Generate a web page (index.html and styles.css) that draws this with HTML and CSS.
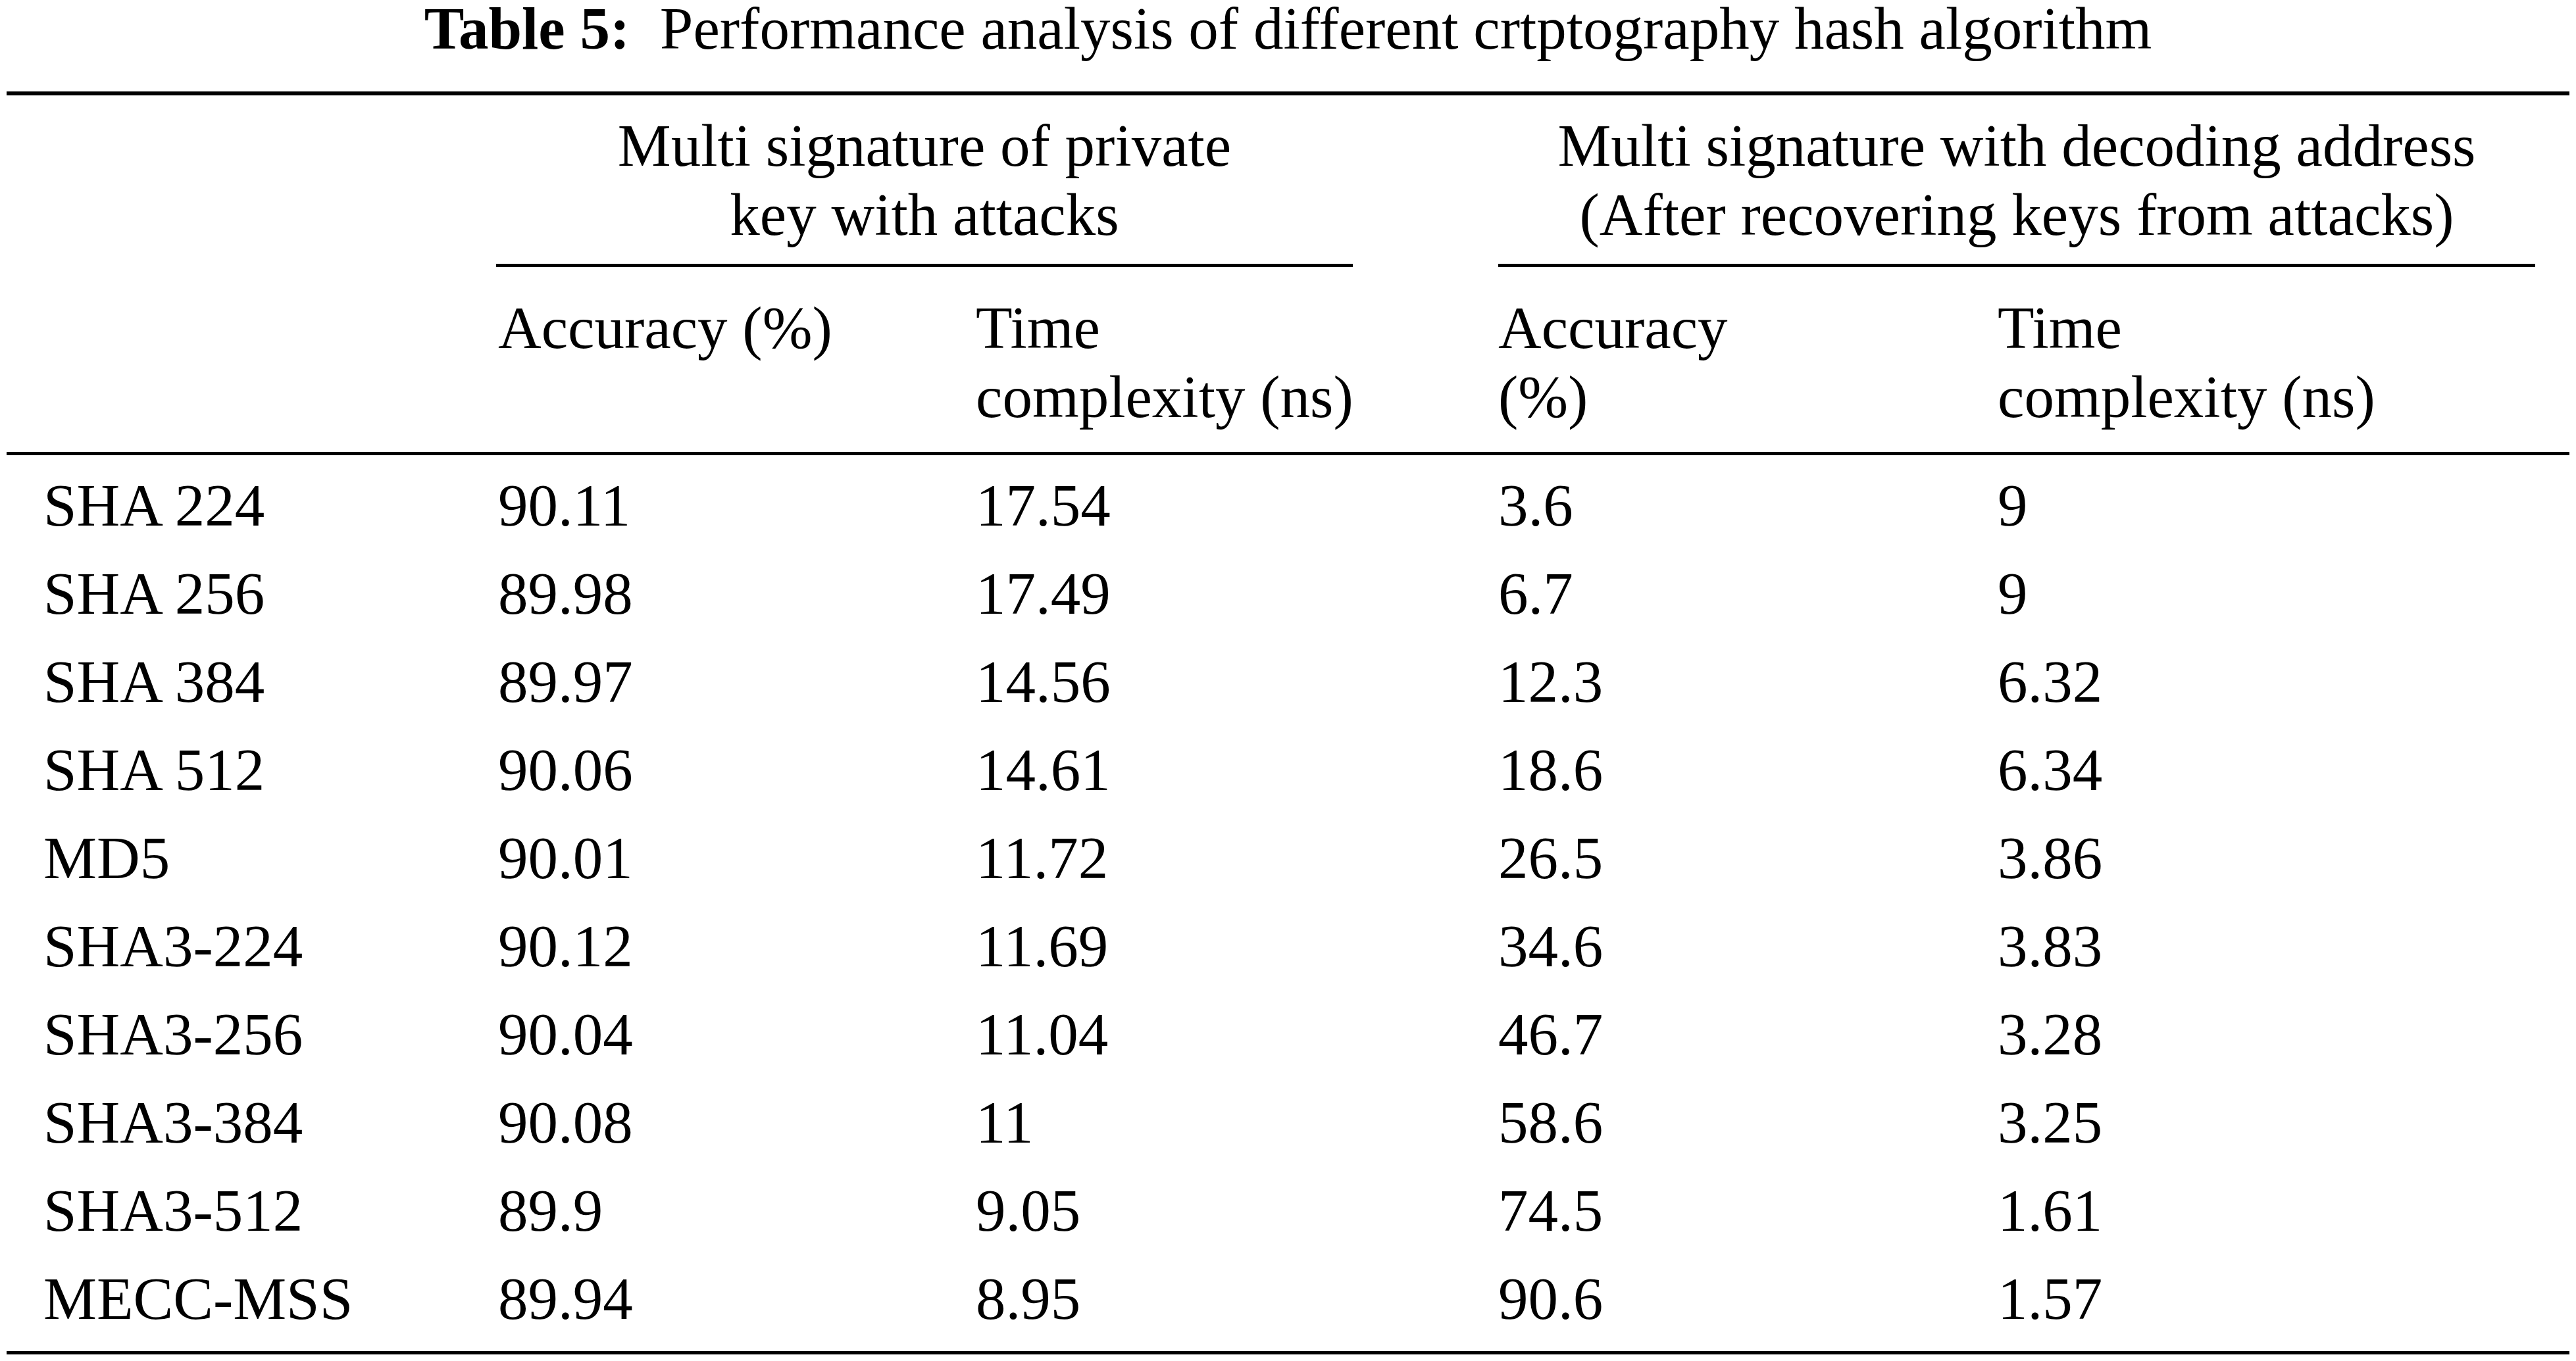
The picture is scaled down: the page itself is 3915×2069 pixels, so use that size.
FILE: index.html
```html
<!DOCTYPE html>
<html>
<head>
<meta charset="utf-8">
<link rel="stylesheet" href="styles.css">
</head>
<body>
<div class="page">
  <div class="caption"><span class="label">Table 5:</span>Performance analysis of different crtptography hash algorithm</div>
  <div class="tbl">
    <div class="head-groups">
      <div class="blank"></div>
      <div class="group g1">Multi signature of private<br>key with attacks</div>
      <div class="group g2">Multi signature with decoding address<br>(After recovering keys from attacks)</div>
    </div>
    <div class="head-sub">
      <div class="cell first"></div>
      <div class="cell">Accuracy (%)</div>
      <div class="cell">Time<br>complexity (ns)</div>
      <div class="cell">Accuracy<br>(%)</div>
      <div class="cell">Time<br>complexity (ns)</div>
    </div>
    <div class="body">
      <div class="row"><div class="cell first">SHA 224</div><div class="cell">90.11</div><div class="cell">17.54</div><div class="cell">3.6</div><div class="cell">9</div></div>
      <div class="row"><div class="cell first">SHA 256</div><div class="cell">89.98</div><div class="cell">17.49</div><div class="cell">6.7</div><div class="cell">9</div></div>
      <div class="row"><div class="cell first">SHA 384</div><div class="cell">89.97</div><div class="cell">14.56</div><div class="cell">12.3</div><div class="cell">6.32</div></div>
      <div class="row"><div class="cell first">SHA 512</div><div class="cell">90.06</div><div class="cell">14.61</div><div class="cell">18.6</div><div class="cell">6.34</div></div>
      <div class="row"><div class="cell first">MD5</div><div class="cell">90.01</div><div class="cell">11.72</div><div class="cell">26.5</div><div class="cell">3.86</div></div>
      <div class="row"><div class="cell first">SHA3-224</div><div class="cell">90.12</div><div class="cell">11.69</div><div class="cell">34.6</div><div class="cell">3.83</div></div>
      <div class="row"><div class="cell first">SHA3-256</div><div class="cell">90.04</div><div class="cell">11.04</div><div class="cell">46.7</div><div class="cell">3.28</div></div>
      <div class="row"><div class="cell first">SHA3-384</div><div class="cell">90.08</div><div class="cell">11</div><div class="cell">58.6</div><div class="cell">3.25</div></div>
      <div class="row"><div class="cell first">SHA3-512</div><div class="cell">89.9</div><div class="cell">9.05</div><div class="cell">74.5</div><div class="cell">1.61</div></div>
      <div class="row"><div class="cell first">MECC-MSS</div><div class="cell">89.94</div><div class="cell">8.95</div><div class="cell">90.6</div><div class="cell">1.57</div></div>
    </div>
  </div>
</div>
</body>
</html>
```

FILE: styles.css
```css
html, body {
  margin: 0;
  padding: 0;
  background: #ffffff;
}
body {
  font-family: "Liberation Serif", "Times New Roman", serif;
  color: #000;
  font-size: 91px;
  line-height: 105px;
}
.page {
  width: 3895px;
  padding: 0 10px;
}
.caption {
  text-align: center;
  font-size: 91px;
  line-height: 87px;
  height: 87px;
  margin-bottom: 52px;
  white-space: nowrap;
}
.caption .label {
  font-weight: bold;
  margin-right: 0.5em;
}
.tbl {
  border-top: 6px solid #000;
  border-bottom: 5px solid #000;
}
.head-groups,
.head-sub,
.row {
  display: grid;
  grid-template-columns: 747px 726px 794px 759px 869px;
}
.head-groups {
  padding-top: 24px;
}
.group {
  grid-column: span 2;
  text-align: center;
  padding-bottom: 22px;
  border-bottom: 5px solid #000;
}
.group.g1 {
  margin-right: 221px;
  margin-left: -3px;
}
.group.g2 {
  margin-right: 52px;
}
.head-sub {
  padding-top: 40px;
  padding-bottom: 31px;
  border-bottom: 5px solid #000;
}
.cell {
  white-space: nowrap;
}
.cell.first {
  padding-left: 56px;
}
.body {
  padding-top: 9.5px;
  padding-bottom: 12.5px;
}
.row {
  padding: 14.5px 0;
}
```
